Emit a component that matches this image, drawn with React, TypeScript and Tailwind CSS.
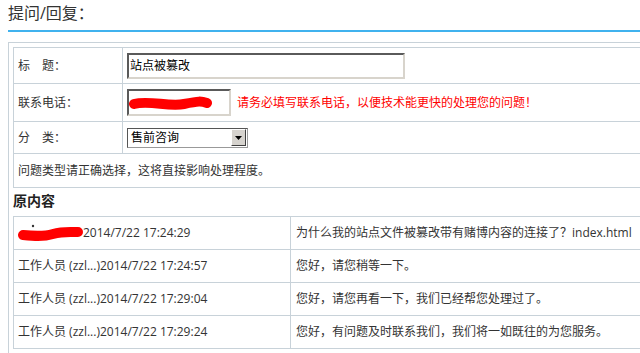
import React from 'react';

const font = { fontFamily: '"Open Sans", "Noto Sans CJK SC", sans-serif' };

const Scribble = ({ w, h, d, dot }: { w: number; h: number; d: string; dot?: [number, number] }) => (
  <svg width={w} height={h} viewBox={`0 0 ${w} ${h}`} className="block">
    <path d={d} fill="none" stroke="#ff0000" strokeWidth={10} strokeLinecap="round" strokeLinejoin="round" />
    {dot && <circle cx={dot[0]} cy={dot[1]} r={1.2} fill="#333" />}
  </svg>
);

const replies = [
  { who: null, time: '2014/7/22 17:24:29', text: '为什么我的站点文件被篡改带有赌博内容的连接了？index.html' },
  { who: '工作人员 (zzl...)', time: '2014/7/22 17:24:57', text: '您好，请您稍等一下。' },
  { who: '工作人员 (zzl...)', time: '2014/7/22 17:29:04', text: '您好，请您再看一下，我们已经帮您处理过了。' },
  { who: '工作人员 (zzl...)', time: '2014/7/22 17:29:24', text: '您好，有问题及时联系我们，我们将一如既往的为您服务。' },
];

const inset = 'border-2 border-t-[#5a5a5a] border-l-[#5a5a5a] border-b-[#d8d4cc] border-r-[#d8d4cc] bg-white';

export default function App() {
  return (
    <div className="w-[640px] h-[353px] overflow-hidden bg-white text-[12px] text-[#333]" style={font}>
      <div className="ml-[8px] w-[700px]">
        {/* heading */}
        <div className="pt-[3px] pb-[7px] border-b-2 border-[#40b2ee] text-[16px] leading-[20px] text-[#333]">
          提问/回复：
        </div>

        <div className="mt-[10px] border border-[#c8d2d9] p-[4px] h-[400px]">
          {/* form table */}
          <div className="border border-[#c8d2d9]">
            <div className="flex h-[36px] border-b border-[#c8d2d9]">
              <div className="w-[109px] shrink-0 border-r border-[#c8d2d9] pl-[4px] flex items-center">标　题：</div>
              <div className="flex items-center pl-[4px]">
                <div className={`w-[278px] h-[26px] ${inset} flex items-center pl-[1px] text-black`}>站点被篡改</div>
              </div>
            </div>
            <div className="flex h-[38px] border-b border-[#c8d2d9]">
              <div className="w-[109px] shrink-0 border-r border-[#c8d2d9] pl-[4px] flex items-center">联系电话：</div>
              <div className="flex items-center pl-[4px]">
                <div className={`w-[104px] h-[27px] ${inset} flex items-center`}>
                  <Scribble w={84} h={20} d="M5 11 C 20 7, 40 14, 55 11 S 72 8, 78 10" />
                </div>
                <span className="ml-[6px] text-[#ff0000]">请务必填写联系电话，以便技术能更快的处理您的问题！</span>
              </div>
            </div>
            <div className="flex h-[32px] border-b border-[#c8d2d9]">
              <div className="w-[109px] shrink-0 border-r border-[#c8d2d9] pl-[4px] flex items-center">分　类：</div>
              <div className="flex items-center pl-[4px]">
                <div className="w-[121px] h-[20px] border border-t-[#555] border-l-[#555] border-b-[#999] border-r-[#999] bg-white flex items-center justify-between pl-[3px] text-black">
                  <span>售前咨询</span>
                  <span className="w-[15px] h-[17px] mr-[1px] bg-[#d6d3ce] border border-t-white border-l-white border-b-[#404040] border-r-[#404040] flex items-center justify-center">
                    <svg width="7" height="4" viewBox="0 0 7 4"><path d="M0 0h7L3.5 4z" fill="#000" /></svg>
                  </span>
                </div>
              </div>
            </div>
            <div className="flex h-[33px] items-center pl-[4px]">问题类型请正确选择，这将直接影响处理程度。</div>
          </div>

          <div className="mt-[3px] mb-[5px] leading-[20px] text-[14px] font-bold text-[#222]">原内容</div>

          {/* replies table */}
          <div className="border border-[#c8d2d9] border-b-0">
            {replies.map((r, i) => (
              <div key={i} className="flex h-[33px] border-b border-[#c8d2d9]">
                <div className="w-[277px] shrink-0 border-r border-[#c8d2d9] pl-[4px] flex items-center">
                  {r.who ? (
                    <span>{r.who}{r.time}</span>
                  ) : (
                    <>
                      <Scribble w={65} h={18} d="M5 11 C 15 12, 25 13, 35 10 S 52 8, 60 8" dot={[15, 2]} />
                      <span>{r.time}</span>
                    </>
                  )}
                </div>
                <div className="flex items-center pl-[5px] whitespace-nowrap">{r.text}</div>
              </div>
            ))}
          </div>
        </div>
      </div>
    </div>
  );
}
